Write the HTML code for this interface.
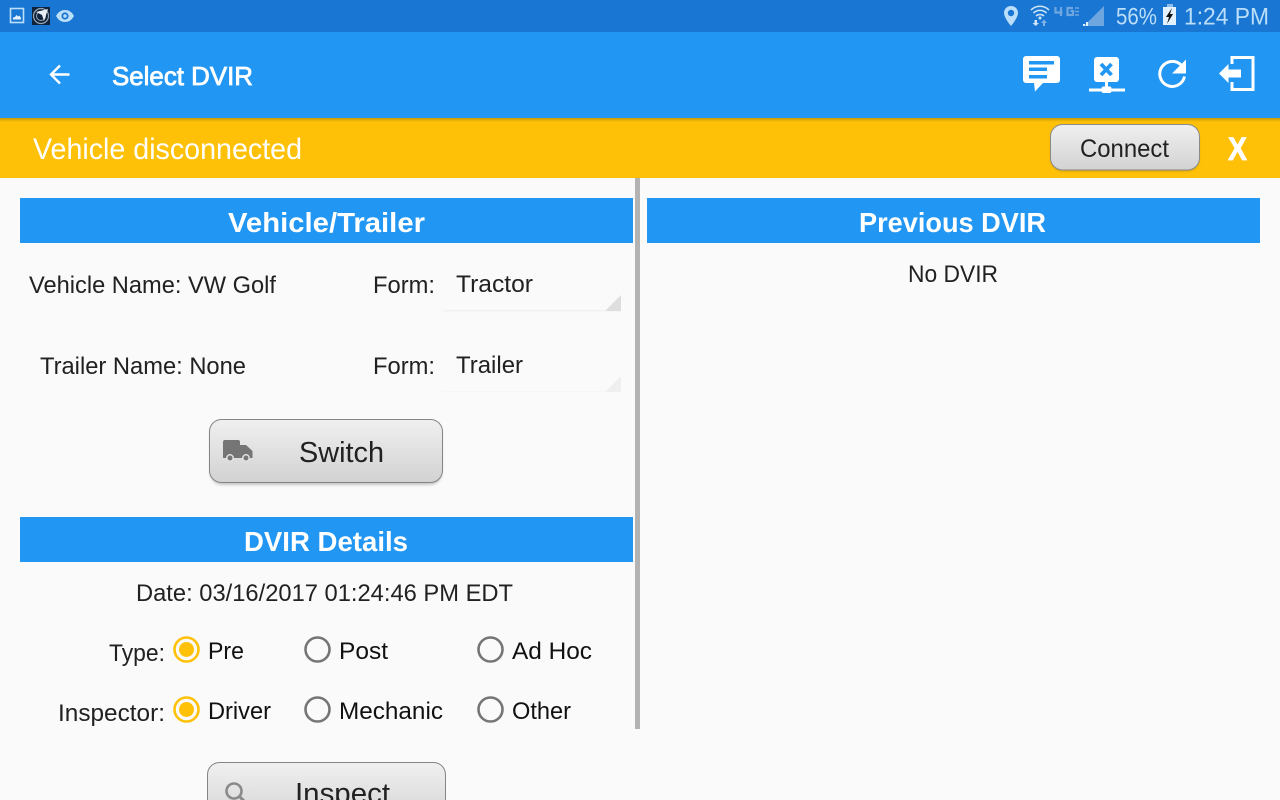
<!DOCTYPE html>
<html><head><meta charset="utf-8"><title>Select DVIR</title>
<style>
html,body{margin:0;padding:0;background:#fafafa;overflow:hidden}
svg{display:block;position:absolute;left:0;top:0}
text{font-family:"Liberation Sans",sans-serif;fill:#212121;font-size:24px}
.b{font-weight:700;fill:#fff;font-size:28px}
.s{fill:#bbdefb;font-size:24px}
.d{fill:#111}
</style></head><body>
<svg width="1280" height="800" viewBox="0 0 1280 800" xmlns="http://www.w3.org/2000/svg">
<defs>
<linearGradient id="g" x1="0" y1="0" x2="0" y2="1"><stop offset="0" stop-color="#f0f0f0"/><stop offset="1" stop-color="#d2d2d2"/></linearGradient>
<linearGradient id="sh" x1="0" y1="0" x2="0" y2="1"><stop offset="0" stop-color="#c79a05"/><stop offset="1" stop-color="#ffc107"/></linearGradient>
<filter id="bs" x="-10%" y="-10%" width="120%" height="130%"><feGaussianBlur stdDeviation="1.2"/></filter>
</defs>
<rect width="1280" height="800" fill="#fafafa"/>
<!-- status bar -->
<rect width="1280" height="32" fill="#1976d2"/>
<g>
<rect x="10.500" y="8.500" width="13" height="14" fill="#1976d2" stroke="#bbdefb" stroke-width="1.600"/>
<path d="M13 19.500v-2l2-.5 1.500-2 1.500 1.500 1.500-1 1.500 2.500v1.500z" fill="#e3f2fd"/>
<rect x="32" y="7" width="18" height="18" fill="#10233c"/>
<circle cx="41" cy="16" r="7.500" fill="none" stroke="#9aa7b3" stroke-width="1.200"/>
<circle cx="41" cy="16" r="4.500" fill="none" stroke="#9aa7b3" stroke-width="1"/>
<path d="M36 12l12-3-4 12-2-6z" fill="#e8eef3"/>
<path d="M56 16c2.500-4.500 5.500-6 9-6s6.500 1.500 9 6c-2.500 4.500-5.500 6-9 6s-6.500-1.500-9-6z" fill="#bbdefb"/>
<circle cx="65" cy="16" r="3.600" fill="#1976d2"/><circle cx="65" cy="16" r="1.800" fill="#bbdefb"/>
<path d="M1011 6c-4 0-7 3-7 7 0 5 7 13 7 13s7-8 7-13c0-4-3-7-7-7z" fill="#bbdefb"/><circle cx="1011" cy="13" r="3.200" fill="#1976d2"/>
<path d="M1031 10c5-5 13-5 18 0M1033.500 13c3.500-3.500 9.500-3.500 13 0M1036 16c2-2 6-2 8 0" fill="none" stroke="#cfe5fa" stroke-width="1.600"/>
<circle cx="1040" cy="18" r="1.500" fill="#cfe5fa"/>
<path d="M1034.500 20h2.500v3h2l-3.300 3-3.200-3h2z" fill="#cfe5fa"/>
<path d="M1043 26v-3h-2l3-3.500 3 3.500h-2v3z" fill="#7fb2e6"/>
<path d="M1055.500 7v5.500h7M1061 7v9M1073 8h-5.500v7h5.500v-4h-2.500" fill="none" stroke="#6ea6e0" stroke-width="2.200"/>
<path d="M1075 8h4M1075 11.500h4M1075 15h4" stroke="#6ea6e0" stroke-width="1.500"/>
<path d="M1104 6v20h-20z" fill="#6ea6e0"/>
<path d="M1083 26h2v-2h-2zM1086 26h2v-4h-2z" fill="#e3f2fd"/>
<rect x="1167" y="4" width="6" height="3" fill="#8fbdec"/>
<rect x="1163" y="7" width="13" height="18" fill="#e3f2fd"/>
<path d="M1172 8l-6 9h3l-2 7 6-10h-3l2-6z" fill="#111"/>
</g>
<text class="s" x="1116" y="24.500" textLength="41" lengthAdjust="spacingAndGlyphs">56%</text>
<text class="s" x="1184" y="24.500" textLength="85" lengthAdjust="spacingAndGlyphs">1:24 PM</text>
<!-- app bar -->
<rect y="32" width="1280" height="86" fill="#2196f3"/>
<path d="M69.500 74.500H51.500M60 65.500l-9 9 9 9" fill="none" stroke="#fff" stroke-width="2.400"/>
<text x="112" y="85" textLength="141" lengthAdjust="spacingAndGlyphs" style="fill:#fff;font-size:26px;stroke:#fff;stroke-width:.8">Select DVIR</text>
<path d="M1026 56h31a3 3 0 0 1 3 3v21a3 3 0 0 1-3 3h-14l-8 8.500-1-8.500h-8a3 3 0 0 1-3-3v-21a3 3 0 0 1 3-3z" fill="#fff"/>
<path d="M1029 61h25v3.500h-25zM1029 67.500h18v3.500h-18zM1029 75h18v3.500h-18z" fill="#2196f3"/>
<rect x="1094" y="57" width="25" height="25" rx="3" fill="#fff"/>
<path d="M1101 64l10.500 11M1111.500 64l-10.500 11" stroke="#2196f3" stroke-width="3.800"/>
<rect x="1105" y="82" width="3" height="6" fill="#fff"/>
<rect x="1089" y="88.500" width="36" height="3" fill="#fff"/>
<rect x="1101.500" y="86.500" width="10" height="6.500" rx="2" fill="#fff"/>
<path d="M1181.500 65.500a12.500 12.500 0 1 0 3 11" fill="none" stroke="#fff" stroke-width="3"/>
<path d="M1186 59.500v14h-14z" fill="#fff"/>
<path d="M1232 64v-6.500h21v32h-21V82" fill="none" stroke="#fff" stroke-width="3"/>
<path d="M1219 73.500l9.500-9.500v5.500h12.500v8h-12.500v5.500z" fill="#fff"/>
<!-- amber bar -->
<rect y="118" width="1280" height="60" fill="#ffc107"/>
<rect y="118" width="1280" height="4" fill="url(#sh)"/>
<text x="33" y="159" textLength="269" lengthAdjust="spacingAndGlyphs" style="fill:#fff;font-size:30px">Vehicle disconnected</text>
<rect x="1051" y="126" width="148" height="45" rx="12" fill="#8a6c00" opacity=".5" filter="url(#bs)"/>
<rect x="1050.500" y="124.500" width="149" height="45.500" rx="12" fill="url(#g)" stroke="#8a8a8a"/>
<text x="1080" y="157" textLength="89" lengthAdjust="spacingAndGlyphs" style="font-size:25px">Connect</text>
<text class="b" x="1228" y="160" textLength="19" lengthAdjust="spacingAndGlyphs" style="font-size:32px;stroke:#fff;stroke-width:.8">X</text>
<!-- divider -->
<rect x="635" y="178" width="5" height="551" fill="#b3b3b3"/>
<!-- section headers -->
<rect x="20" y="198" width="613" height="45" fill="#2196f3"/>
<rect x="647" y="198" width="613" height="45" fill="#2196f3"/>
<rect x="20" y="517" width="613" height="45" fill="#2196f3"/>
<text class="b" x="228" y="232" textLength="197" lengthAdjust="spacingAndGlyphs">Vehicle/Trailer</text>
<text class="b" x="859" y="232" textLength="187" lengthAdjust="spacingAndGlyphs">Previous DVIR</text>
<text class="b" x="244" y="551" textLength="164" lengthAdjust="spacingAndGlyphs">DVIR Details</text>
<text x="908" y="282" textLength="90" lengthAdjust="spacingAndGlyphs">No DVIR</text>
<!-- vehicle rows -->
<text x="29" y="293" textLength="247" lengthAdjust="spacingAndGlyphs">Vehicle Name: VW Golf</text>
<text x="373" y="293" textLength="62" lengthAdjust="spacingAndGlyphs">Form:</text>
<text x="456" y="292" textLength="77" lengthAdjust="spacingAndGlyphs">Tractor</text>
<rect x="443" y="310" width="178" height="1.500" fill="#f2f2f2"/>
<path d="M621 295v16h-16z" fill="#dedede"/>
<text x="40" y="374" textLength="206" lengthAdjust="spacingAndGlyphs">Trailer Name: None</text>
<text x="373" y="374" textLength="62" lengthAdjust="spacingAndGlyphs">Form:</text>
<text x="456" y="373" textLength="67" lengthAdjust="spacingAndGlyphs">Trailer</text>
<rect x="443" y="391" width="178" height="1.500" fill="#f6f6f6"/>
<path d="M621 376v16h-16z" fill="#efefef"/>
<!-- switch -->
<rect x="210" y="422" width="232" height="63" rx="12" fill="#888" opacity=".45" filter="url(#bs)"/>
<rect x="209.500" y="419.500" width="233" height="63" rx="12" fill="url(#g)" stroke="#858585"/>
<path d="M225 440h13a2 2 0 0 1 2 2v3h6l6.500 6v7h-29.500v-16a2 2 0 0 1 2-2z" fill="#757575"/>
<circle cx="230" cy="458" r="3.200" fill="#757575" stroke="#e2e2e2" stroke-width="1.500"/>
<circle cx="246" cy="458" r="3.200" fill="#757575" stroke="#e2e2e2" stroke-width="1.500"/>
<text x="299" y="462" textLength="85" lengthAdjust="spacingAndGlyphs" style="font-size:29px">Switch</text>
<!-- details -->
<text x="136" y="601" textLength="377" lengthAdjust="spacingAndGlyphs">Date: 03/16/2017 01:24:46 PM EDT</text>
<text x="109" y="661" textLength="56" lengthAdjust="spacingAndGlyphs">Type:</text>
<text x="58" y="721" textLength="107" lengthAdjust="spacingAndGlyphs">Inspector:</text>
<g fill="none" stroke-width="2.600">
<circle cx="186.500" cy="649.500" r="12" stroke="#ffc107"/>
<circle cx="186.500" cy="709.500" r="12" stroke="#ffc107"/>
<circle cx="317.500" cy="649.500" r="12" stroke="#757575"/>
<circle cx="490.500" cy="649.500" r="12" stroke="#757575"/>
<circle cx="317.500" cy="709.500" r="12" stroke="#757575"/>
<circle cx="490.500" cy="709.500" r="12" stroke="#757575"/>
</g>
<circle cx="186.500" cy="649.500" r="7.500" fill="#ffc107"/>
<circle cx="186.500" cy="709.500" r="7.500" fill="#ffc107"/>
<text class="d" x="208" y="659" textLength="36" lengthAdjust="spacingAndGlyphs">Pre</text>
<text class="d" x="339" y="659" textLength="49" lengthAdjust="spacingAndGlyphs">Post</text>
<text class="d" x="512" y="659" textLength="80" lengthAdjust="spacingAndGlyphs">Ad Hoc</text>
<text class="d" x="208" y="719" textLength="63" lengthAdjust="spacingAndGlyphs">Driver</text>
<text class="d" x="339" y="719" textLength="104" lengthAdjust="spacingAndGlyphs">Mechanic</text>
<text class="d" x="512" y="719" textLength="59" lengthAdjust="spacingAndGlyphs">Other</text>
<!-- inspect -->
<rect x="207.500" y="762.500" width="238" height="63" rx="12" fill="url(#g)" stroke="#858585"/>
<circle cx="234" cy="791" r="7.500" fill="none" stroke="#8a8a8a" stroke-width="2.600"/>
<path d="M239.500 796.500l5 5" stroke="#8a8a8a" stroke-width="3"/>
<text x="295" y="803" textLength="95" lengthAdjust="spacingAndGlyphs" style="font-size:29px">Inspect</text>
</svg>
</body></html>
